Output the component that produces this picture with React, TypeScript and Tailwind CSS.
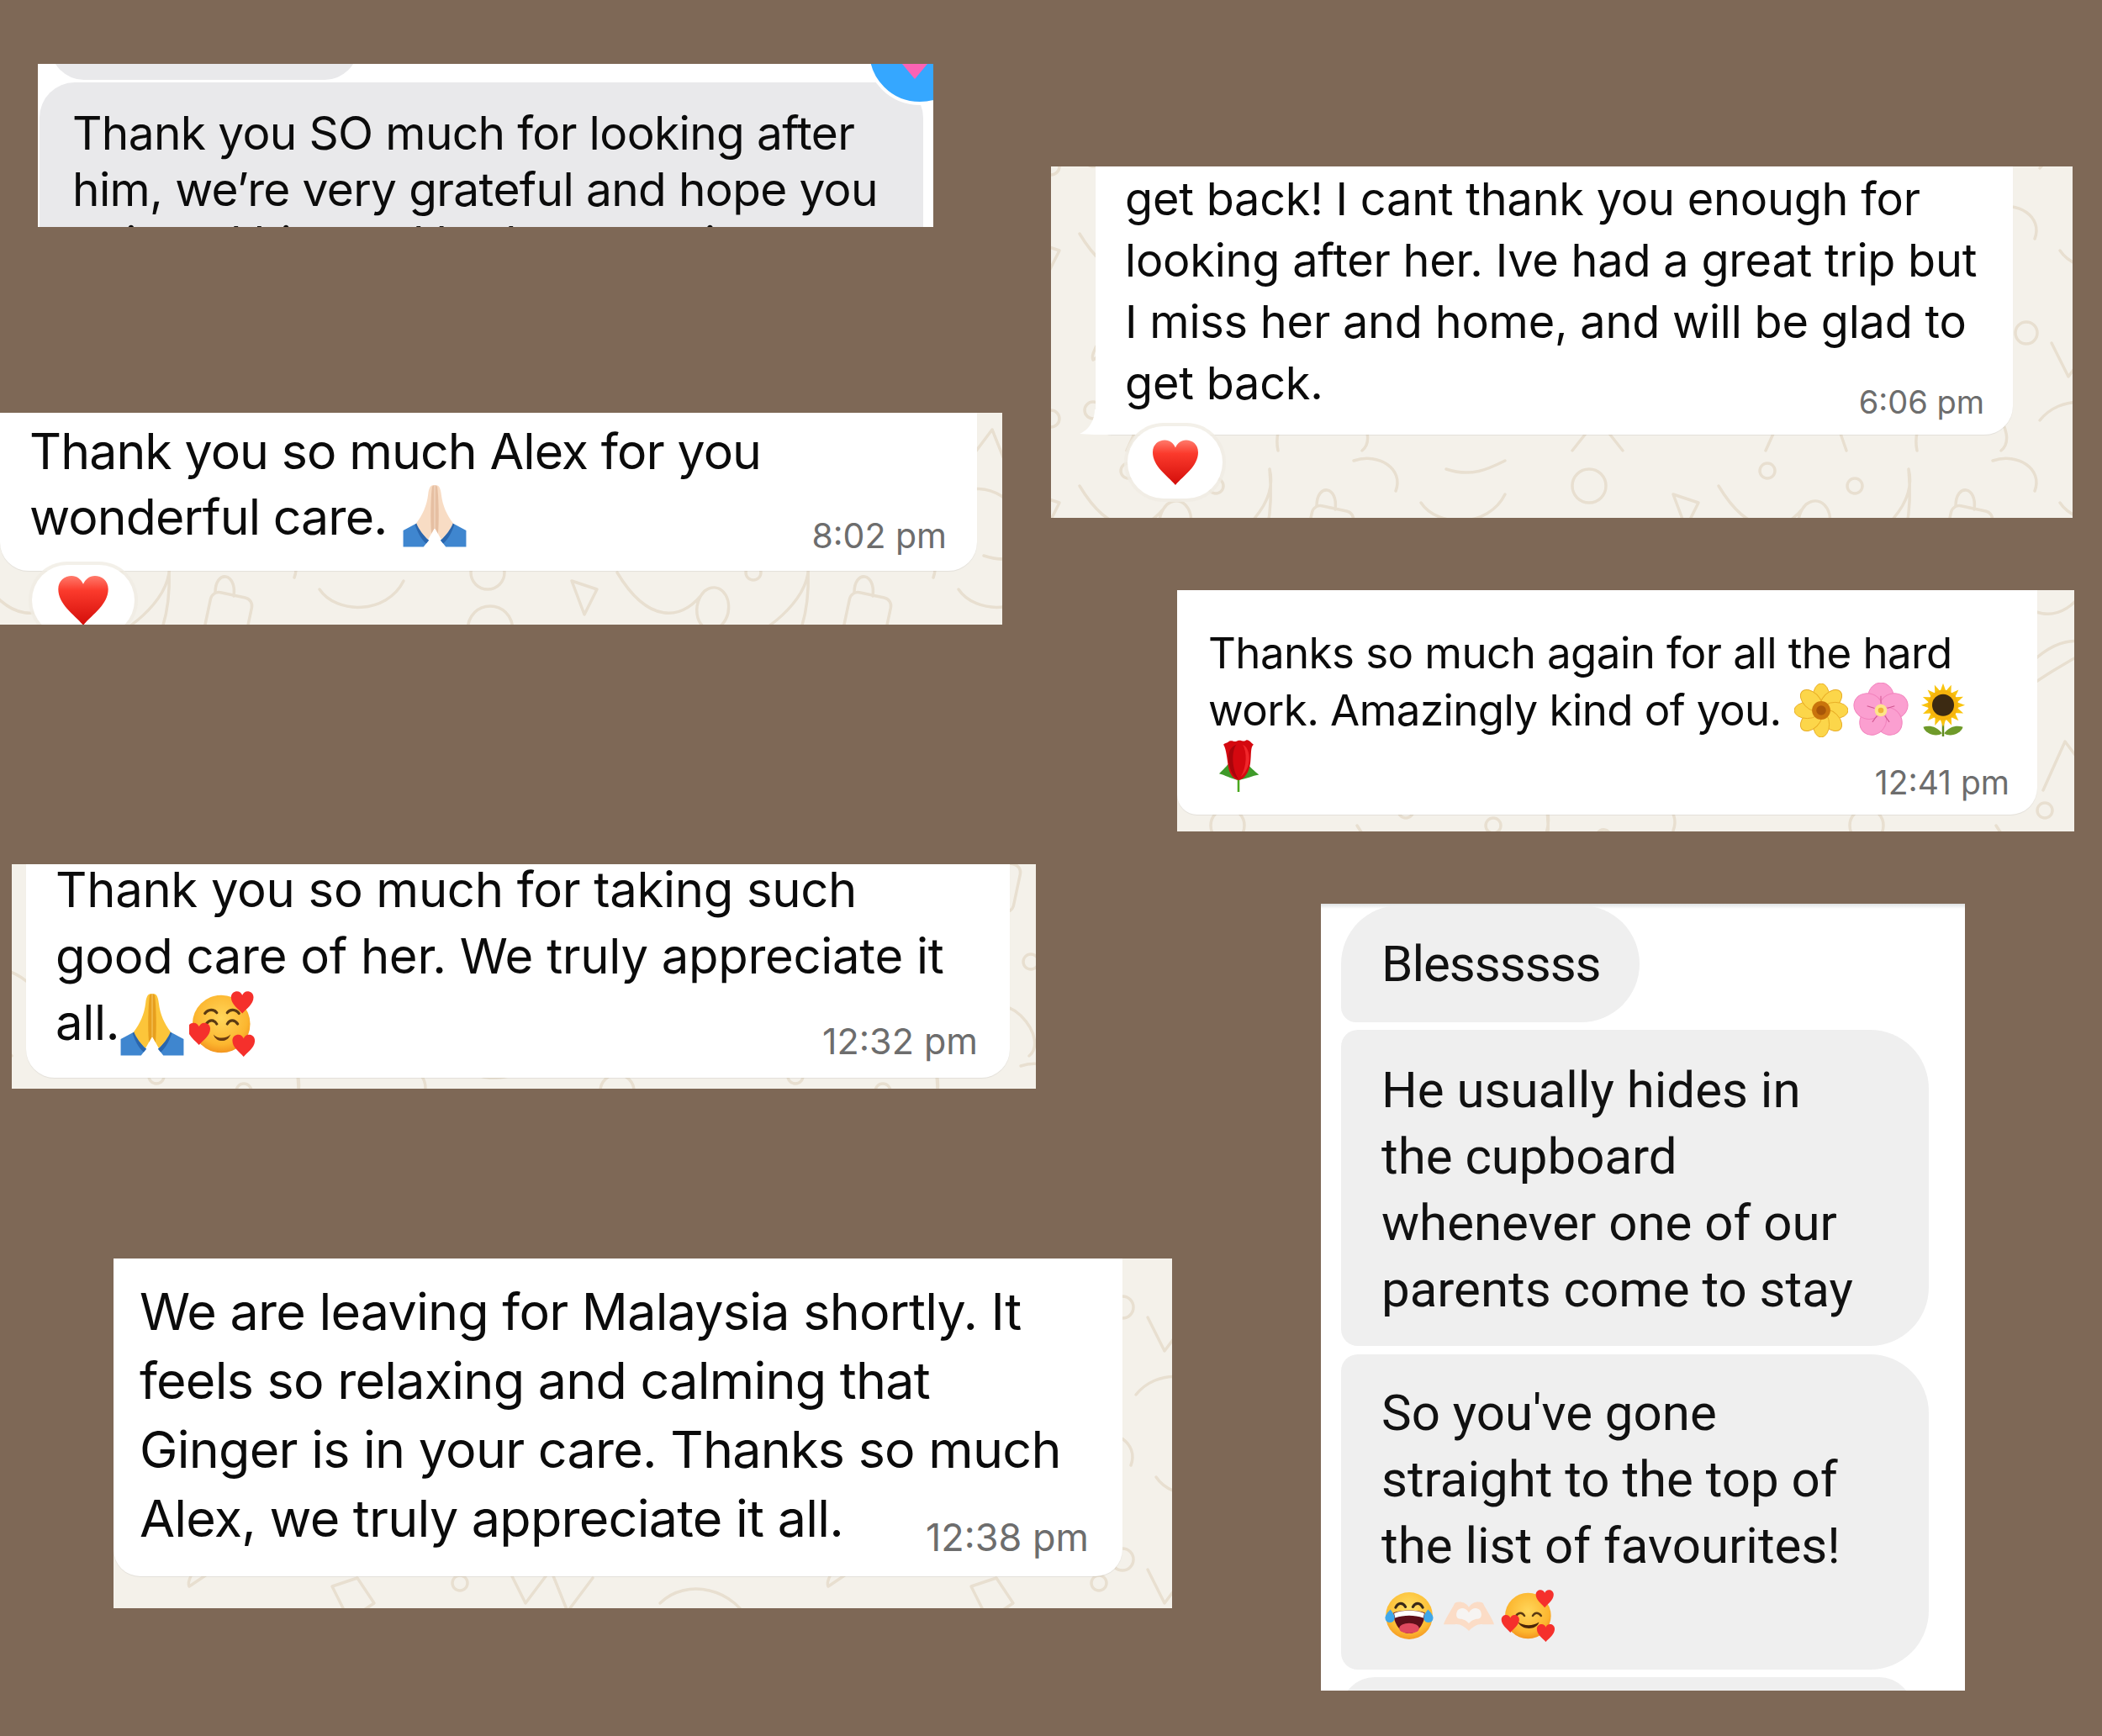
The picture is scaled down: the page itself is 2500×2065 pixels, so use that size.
import { ReactNode, useId } from "react";

const HEART =
  "M50 95 C34 76 5 58 5 30 C5 14 17 6 29 6 C39 6 46 12 50 21 C54 12 61 6 71 6 C83 6 95 14 95 30 C95 58 66 76 50 95Z";

function Heart({ className }: { className?: string }) {
  const id = useId();
  return (
    <svg viewBox="0 0 100 100" className={className}>
      <defs>
        <linearGradient id={id} x1="0" y1="0" x2="0" y2="1">
          <stop offset="0" stopColor="#ff7a6b" />
          <stop offset="0.3" stopColor="#fb3a2c" />
          <stop offset="1" stopColor="#d30d0a" />
        </linearGradient>
      </defs>
      <path d={HEART} fill={`url(#${id})`} />
    </svg>
  );
}

function Pray({ skin, shade, className }: { skin: string; shade: string; className?: string }) {
  const half = (
    <>
      <path d="M2 73 L23 62 C27 72 34 82 41 88 L33 98 L2 98Z" fill="#3f86cf" />
      <path d="M23 62 C27 72 34 82 41 88 L37 93 C29 86 24 76 20 64Z" fill="#2a66ad" />
      <path
        d="M49.5 4 C44 3 41 8 40 18 C38 36 31 50 22 62 C26 72 33 81 40 87 L49.5 70Z"
        fill={skin}
      />
      <path d="M49.5 4 L49.5 70 L45 78 C43 56 44 24 46 6Z" fill={shade} />
    </>
  );
  return (
    <svg viewBox="0 0 100 100" className={className}>
      {half}
      <g transform="matrix(-1 0 0 1 100 0)">{half}</g>
    </svg>
  );
}

function SmileHearts({ fb, className }: { fb?: boolean; className?: string }) {
  const id = useId();
  return (
    <svg viewBox="0 0 100 100" className={className}>
      <defs>
        <radialGradient id={id} cx="0.5" cy="0.4" r="0.65">
          <stop offset="0" stopColor="#ffd65a" />
          <stop offset="0.7" stopColor="#fcb62f" />
          <stop offset="1" stopColor="#f08a1a" />
        </radialGradient>
      </defs>
      <circle cx="49" cy="50" r="44" fill={`url(#${id})`} />
      <g fill="none" stroke="#5a3a12" strokeWidth="4" strokeLinecap="round">
        {!fb && <path d="M24 34 C29 27 38 27 42 33" />}
        {!fb && <path d="M58 33 C62 27 71 27 76 34" />}
        <path d="M26 50 C31 43 38 43 42 50" />
        <path d="M58 50 C62 43 69 43 74 50" />
      </g>
      {fb ? (
        <path d="M30 62 C42 70 58 70 70 62 C66 78 36 78 30 62Z" fill="#4a2508" />
      ) : (
        <path d="M37 66 C43 73 57 73 63 66 C59 79 41 79 37 66Z" fill="#6a3b10" />
      )}
      <g transform="translate(62 -2) scale(0.38)">
        <path d={HEART} fill="#f5302c" />
      </g>
      <g transform="translate(-4 46) scale(0.38)">
        <path d={HEART} fill="#f5302c" />
      </g>
      <g transform="translate(64 64) scale(0.38)">
        <path d={HEART} fill="#f5302c" />
      </g>
    </svg>
  );
}

const ANGLES = [0, 45, 90, 135, 180, 225, 270, 315];

function YellowFlower({ className }: { className?: string }) {
  return (
    <svg viewBox="0 0 100 100" className={className}>
      {ANGLES.map((a) => (
        <ellipse key={a} cx="50" cy="24" rx="15" ry="24" fill="#fcd64a" stroke="#e8ac25" strokeWidth="1.5" transform={`rotate(${a} 50 50)`} />
      ))}
      <circle cx="50" cy="50" r="17" fill="#c9740c" />
      <circle cx="50" cy="50" r="9" fill="#a85608" />
    </svg>
  );
}

function PinkFlower({ className }: { className?: string }) {
  return (
    <svg viewBox="0 0 100 100" className={className}>
      {[0, 72, 144, 216, 288].map((a) => (
        <ellipse key={a} cx="50" cy="26" rx="23" ry="26" fill="#fb9fd0" stroke="#f283bd" strokeWidth="1.5" transform={`rotate(${a} 50 50)`} />
      ))}
      {[0, 72, 144, 216, 288].map((a) => (
        <line key={a} x1="50" y1="38" x2="50" y2="24" stroke="#d0558f" strokeWidth="1.5" transform={`rotate(${a} 50 50)`} />
      ))}
      <circle cx="50" cy="50" r="11" fill="#fde58a" />
      <circle cx="50" cy="50" r="5" fill="#efb23a" />
    </svg>
  );
}

function Sunflower({ className }: { className?: string }) {
  return (
    <svg viewBox="0 0 100 100" className={className}>
      <path d="M50 60 L50 100" stroke="#5f8a1e" strokeWidth="4" />
      <path d="M48 94 C38 80 22 78 12 82 C16 96 38 102 48 94Z" fill="#6f9a2a" />
      <path d="M52 94 C62 80 78 78 88 82 C84 96 62 102 52 94Z" fill="#6f9a2a" />
      {[...ANGLES, 22, 67, 112, 157, 202, 247, 292, 337].map((a) => (
        <path key={a} d="M50 -2 L58 20 L42 20Z" fill="#f9c40e" transform={`rotate(${a} 50 40)`} />
      ))}
      <circle cx="50" cy="40" r="29" fill="#f6b40c" />
      <circle cx="50" cy="40" r="21" fill="#3c2a12" />
    </svg>
  );
}

function Rose({ className }: { className?: string }) {
  return (
    <svg viewBox="0 0 100 100" className={className}>
      <path d="M50 72 L50 100" stroke="#4aa81f" strokeWidth="4" />
      <path d="M50 78 C36 76 24 68 14 66 C20 60 30 50 34 44 Z" fill="#3f9a2a" />
      <path d="M50 78 C64 76 76 70 88 68 C80 62 72 54 68 50 Z" fill="#3f9a2a" />
      <path
        d="M30 8 C36 2 42 8 46 6 C52 1 60 8 64 4 C70 2 74 10 78 12 C72 16 74 30 72 46 C70 62 62 76 50 78 C38 76 32 64 30 46 C28 30 26 18 22 12 C24 10 26 10 30 8Z"
        fill="#d4080f"
      />
      <path d="M46 12 C36 26 38 58 50 76 C42 74 34 62 32 44 C30 30 32 18 46 12Z" fill="#a9050b" />
      <path d="M58 12 C66 26 66 52 54 72 C64 64 70 52 70 38 C70 26 66 16 58 12Z" fill="#f0262a" />
    </svg>
  );
}

function Laugh({ className }: { className?: string }) {
  const id = useId();
  return (
    <svg viewBox="0 0 100 100" className={className}>
      <defs>
        <radialGradient id={id} cx="0.5" cy="0.35" r="0.7">
          <stop offset="0" stopColor="#ffe066" />
          <stop offset="0.7" stopColor="#fcbc33" />
          <stop offset="1" stopColor="#f4901e" />
        </radialGradient>
      </defs>
      <circle cx="50" cy="50" r="45" fill={`url(#${id})`} />
      <g fill="none" stroke="#3a2a18" strokeWidth="5" strokeLinecap="round">
        <path d="M24 34 C29 24 38 24 43 33" />
        <path d="M57 33 C62 24 71 24 76 34" />
      </g>
      <path d="M20 44 C38 38 62 38 80 44 C80 66 66 84 50 84 C34 84 20 66 20 44Z" fill="#5e0f1a" />
      <path d="M21 45 C38 38 62 38 79 45 L77 54 C60 48 40 48 23 54Z" fill="#fff" />
      <ellipse cx="50" cy="74" rx="19" ry="10" fill="#e0495f" />
      <path d="M14 38 C20 46 22 50 22 54 A9 9 0 0 1 4 54 C4 50 8 44 14 38Z" fill="#3fa7ea" />
      <path d="M86 38 C92 44 96 50 96 54 A9 9 0 0 1 78 54 C78 50 80 46 86 38Z" fill="#3fa7ea" />
    </svg>
  );
}

function HandHeart({ className }: { className?: string }) {
  return (
    <svg viewBox="0 0 100 60" className={className}>
      <path
        d="M50 14 C44 4 32 2 24 6 C16 22 8 32 3 46 L24 46 C32 44 42 50 50 58 C58 50 68 44 76 46 L97 46 C92 32 84 22 76 6 C68 2 56 4 50 14Z"
        fill="#fbdcc6"
      />
      <path d="M50 24 C44 14 34 14 29 20 C24 30 28 36 34 36 C40 36 46 40 50 44 C54 40 60 36 66 36 C72 36 76 30 71 20 C66 14 56 14 50 24Z" fill="#f6f4f2" />
    </svg>
  );
}

function Doodles({ dx = 0, dy = 0 }: { dx?: number; dy?: number }) {
  const id = useId();
  return (
    <svg className="absolute inset-0 w-full h-full">
      <defs>
        <pattern
          id={id}
          width="760"
          height="300"
          patternUnits="userSpaceOnUse"
          patternTransform={`translate(${dx} ${dy})`}
        >
          <g fill="none" stroke="#e8dfd0" strokeWidth="3.5" strokeLinecap="round" strokeLinejoin="round">
            <path d="M14 40 C50 100 90 100 118 62 M118 62 C134 50 150 66 146 88 C140 112 116 114 110 94 C106 80 112 68 118 62" />
            <circle cx="72" cy="22" r="9" />
            <circle cx="176" cy="40" r="9" />
            <path d="M128 130 C88 150 60 170 30 190 C24 180 60 130 96 122 C110 118 124 122 128 130Z" />
            <circle cx="146" cy="132" r="15" />
            <path d="M160 124 C210 100 250 60 240 20 M160 142 C200 170 250 130 240 20" />
            <rect x="286" y="66" width="50" height="58" rx="10" transform="rotate(12 310 95)" />
            <path d="M296 64 C296 36 322 40 318 68" />
            <circle cx="380" cy="158" r="13" />
            <circle cx="352" cy="186" r="9" />
            <path d="M420 60 C440 90 500 90 520 50 M450 20 C480 30 500 20 520 10" />
            <path d="M410 170 L430 210 L460 170 L480 220 L510 180" />
            <circle cx="30" cy="250" r="10" />
            <path d="M70 298 L96 240 L120 272 L146 240 L166 298" />
            <circle cx="214" cy="240" r="11" />
            <path d="M250 298 C240 250 300 214 340 250 C360 270 360 290 350 298" />
            <path d="M396 262 C420 232 470 232 490 270" />
            <circle cx="532" cy="252" r="10" />
            <path d="M540 110 C520 140 540 170 556 150" />
            <path d="M470 120 L520 130 L500 150Z" />
            <path d="M200 190 L230 180 L250 210 L220 230Z" />
            <path d="M340 10 C370 0 400 20 390 46" />
            <circle cx="620" cy="40" r="20" />
            <path d="M596 110 C596 70 650 70 650 110 L650 170 L596 170Z M596 130 L650 130" />
            <path d="M590 210 C620 180 680 190 700 240" />
            <circle cx="700" cy="120" r="16" />
            <path d="M720 50 L750 60 L735 90Z" />
            <path d="M600 298 L630 260 L660 298" />
            <circle cx="740" cy="260" r="10" />
          </g>
        </pattern>
      </defs>
      <rect width="100%" height="100%" fill={`url(#${id})`} />
    </svg>
  );
}

function Tail() {
  return (
    <svg viewBox="0 0 40 30" className="absolute bottom-0 left-[-19px] w-[40px] h-[30px]">
      <path d="M18 0 C18 12 12 24 0 29 C10 30 24 30 40 30 L40 0Z" fill="#fff" />
    </svg>
  );
}

function Bubble({
  className,
  lines,
  time,
  textClass,
  timeClass,
  children,
}: {
  className: string;
  lines: ReactNode[];
  time: string;
  textClass: string;
  timeClass: string;
  children?: ReactNode;
}) {
  return (
    <div className={`relative flex justify-between items-end bg-white shadow-[0_1px_1px_rgba(0,0,0,0.07)] ${className}`}>
      {children}
      <div className={`self-start w-0 grow whitespace-nowrap text-[#0b0b0b] ${textClass}`}>
        {lines.map((l, i) => (
          <div key={i}>{l}</div>
        ))}
      </div>
      <span className={`shrink-0 whitespace-nowrap text-[#6d6d6d] ${timeClass}`}>{time}</span>
    </div>
  );
}

function Reaction({ className, heart }: { className: string; heart: string }) {
  return (
    <div className={`absolute flex items-center justify-center bg-white rounded-[44px] shadow-[0_0_0_4px_rgba(240,236,228,0.8)] ${className}`}>
      <Heart className={heart} />
    </div>
  );
}

export default function App() {
  return (
    <div className="flex w-[2500px] h-[2065px] overflow-hidden bg-[#7e6856] font-['Inter','Liberation_Sans',sans-serif]">
      {/* left column */}
      <div className="w-[1250px] shrink-0">
        {/* grey chat crop */}
        <div className="relative overflow-hidden mt-[76px] ml-[45px] w-[1065px] h-[194px] bg-white">
          <div className="absolute top-[-40px] left-[15px] w-[366px] h-[59px] bg-[#e9e9eb] rounded-b-[40px]" />
          <div className="absolute top-[-79px] left-[985px] w-[128px] h-[128px] bg-[#35a7ff] rounded-full border-[4px] border-white z-10" />
          <svg viewBox="0 0 50 30" className="absolute top-0 left-[1022px] w-[42px] h-[18px] z-20">
            <path d="M0 0 L50 0 L25 30Z" fill="#fb63b5" />
          </svg>
          <div className="mt-[22px] ml-[2px] w-[1051px] h-[172px] pl-[39px] pt-[27px] bg-[#e9e9eb] rounded-t-[42px] whitespace-nowrap text-[#0b0b0b] text-[55px] leading-[67px] tracking-[-0.64px]">
            <div>Thank you SO much for looking after</div>
            <div>him, we’re very grateful and hope you</div>
            <div className="mt-[-3px]">enjoyed him and had a great time</div>
          </div>
        </div>

        {/* Alex */}
        <div className="relative overflow-hidden mt-[221px] w-[1192px] h-[252px] bg-[#f4f1ea]">
          <Doodles dx={-40} dy={150} />
          <Bubble
            className="w-[1162px] h-[188px] pl-[35px] pr-[36px] pt-[7px] pb-[17px] rounded-b-[34px]"
            textClass="text-[59px] leading-[78px] tracking-[-0.9px]"
            timeClass="text-[41px] leading-[50px]"
            time="8:02 pm"
            lines={[
              "Thank you so much Alex for you",
              <span className="flex items-center h-[78px]">
                wonderful care.
                <Pray skin="#f8dcc4" shade="#e6bfa2" className="shrink-0 w-[78px] h-[78px] ml-[18px] mb-[4px]" />
              </span>,
            ]}
          />
          <Reaction className="left-[38px] top-[181px] w-[122px] h-[84px]" heart="w-[66px] h-[66px]" />
        </div>

        {/* taking such good care */}
        <div className="relative overflow-hidden mt-[285px] ml-[14px] w-[1218px] h-[267px] bg-[#f4f1ea]">
          <Doodles dx={100} dy={230} />
          <Bubble
            className="ml-[17px] w-[1170px] h-[254px] pl-[35px] pr-[38px] pb-[19px] rounded-b-[34px]"
            textClass="text-[58px] leading-[79px] tracking-[-0.3px] mt-[-9px]"
            timeClass="text-[43px] leading-[50px]"
            time="12:32 pm"
            lines={[
              "Thank you so much for taking such",
              "good care of her. We truly appreciate it",
              <span className="flex items-center h-[79px]">
                all.
                <Pray skin="#fcc53a" shade="#e79f1e" className="shrink-0 w-[78px] h-[78px] mt-[2px]" />
                <SmileHearts className="shrink-0 w-[78px] h-[78px] ml-[5px] mt-[2px]" />
              </span>,
            ]}
          />
        </div>

        {/* Malaysia */}
        <div className="relative overflow-hidden mt-[202px] ml-[135px] w-[1259px] h-[416px] bg-[#f4f1ea]">
          <Doodles dx={60} dy={200} />
          <Bubble
            className="w-[1200px] h-[378px] pl-[31px] pr-[40px] pt-[22px] pb-[21px] rounded-b-[32px]"
            textClass="text-[61px] leading-[82px] tracking-[-0.75px]"
            timeClass="text-[45px] leading-[50px]"
            time="12:38 pm"
            lines={[
              "We are leaving for Malaysia shortly. It",
              "feels so relaxing and calming that",
              "Ginger is in your care. Thanks so much",
              "Alex, we truly appreciate it all.",
            ]}
          />
        </div>
      </div>

      {/* right column */}
      <div className="grow">
        <div className="relative overflow-hidden mt-[198px] w-[1215px] h-[418px] bg-[#f4f1ea]">
          <Doodles dx={20} dy={40} />
          <Bubble
            className="ml-[53px] w-[1091px] h-[319px] pl-[35px] pr-[34px] pt-[2px] pb-[14px] rounded-br-[34px] rounded-bl-[20px]"
            textClass="text-[54px] leading-[73px] tracking-[-0.2px]"
            timeClass="text-[38px] leading-[50px]"
            time="6:06 pm"
            lines={[
              "get back! I cant thank you enough for",
              "looking after her. Ive had a great trip but",
              "I miss her and home, and will be glad to",
              "get back.",
            ]}
          >
            <Tail />
          </Bubble>
          <Reaction className="left-[91px] top-[309px] w-[113px] h-[86px]" heart="w-[60px] h-[60px]" />
        </div>

        <div className="relative overflow-hidden mt-[86px] ml-[150px] w-[1067px] h-[287px] bg-[#f4f1ea]">
          <Doodles dx={200} dy={240} />
          <Bubble
            className="w-[1023px] h-[267px] pl-[37px] pr-[33px] pt-[41px] pb-[16px] rounded-bl-[24px] rounded-br-[32px]"
            textClass="text-[51px] leading-[68px] tracking-[-0.56px]"
            timeClass="text-[39px] leading-[44px]"
            time="12:41 pm"
            lines={[
              "Thanks so much again for all the hard",
              <span className="flex items-center h-[68px]">
                work. Amazingly kind of you.
                <YellowFlower className="shrink-0 w-[64px] h-[64px] ml-[15px]" />
                <PinkFlower className="shrink-0 w-[66px] h-[66px] ml-[6px]" />
                <Sunflower className="shrink-0 w-[62px] h-[66px] ml-[10px]" />
              </span>,
              <Rose className="w-[64px] h-[66px] mt-[-2px] ml-[4px]" />,
            ]}
          />
        </div>

        {/* messenger crop */}
        <div className="relative overflow-hidden mt-[86px] ml-[321px] w-[766px] h-[936px] bg-white pl-[24px] pt-[2px] font-['Roboto','Liberation_Sans',sans-serif] text-[#111] text-[60px] leading-[79px] whitespace-nowrap">
          <div className="absolute inset-x-0 top-0 h-[6px] bg-gradient-to-b from-[#dfe2e3] to-white" />
          <div className="relative w-[355px] h-[139px] pl-[48px] pt-[30px] bg-[#efefef] rounded-tl-[70px] rounded-r-[70px] rounded-bl-[18px] tracking-[-1px]">
            Blessssss
          </div>
          <div className="mt-[9px] w-[699px] h-[376px] pl-[48px] pt-[32px] bg-[#efefef] rounded-l-[20px] rounded-r-[70px]">
            <div>He usually hides in</div>
            <div>the cupboard</div>
            <div>whenever one of our</div>
            <div>parents come to stay</div>
          </div>
          <div className="mt-[10px] w-[699px] h-[375px] pl-[48px] pt-[30px] bg-[#efefef] rounded-l-[20px] rounded-r-[70px]">
            <div>So you've gone</div>
            <div>straight to the top of</div>
            <div>the list of favourites!</div>
            <div className="flex items-center gap-[6px] mt-[13px]">
              <Laugh className="w-[66px] h-[62px]" />
              <HandHeart className="w-[64px] h-[40px]" />
              <SmileHearts fb className="w-[66px] h-[62px]" />
            </div>
          </div>
          <div className="mt-[9px] w-[680px] h-[40px] bg-[#efefef] rounded-t-[50px]" />
        </div>
      </div>
    </div>
  );
}
